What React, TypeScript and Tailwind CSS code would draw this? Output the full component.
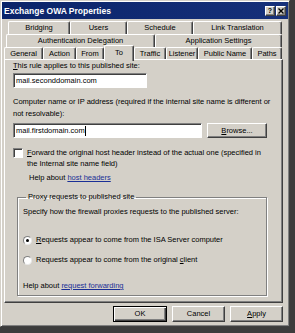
import React from "react"

const raised =
  "border border-t-white border-l-white border-r-[#404040] border-b-[#404040] shadow-[inset_-1px_-1px_0_#808080]"
const sunken =
  "border border-t-[#808080] border-l-[#808080] border-r-white border-b-white shadow-[inset_1px_1px_0_#404040] bg-white"

function Tab({ label, className, selected }: { label: string; className: string; selected?: boolean }) {
  return (
    <div
      className={`${className} flex items-center justify-center rounded-t-[2px] border-t border-l border-r border-t-white border-l-white border-r-[#404040] shadow-[inset_-1px_0_0_#808080] bg-[#d4d0c8] ${
        selected ? "relative z-10 -mt-[2px] h-[16px] -mb-[1px] pb-[2px]" : "h-full"
      }`}
    >
      {label}
    </div>
  )
}

function U({ children }: { children: React.ReactNode }) {
  return <span className="underline">{children}</span>
}

export default function App() {
  return (
    <div className="w-[295px] h-[333px] bg-[#3c3c3c] overflow-hidden font-['Liberation_Sans',Arial,sans-serif] text-[7.5px] leading-[12px] text-black">
      <div className="w-[290px] h-[327px] bg-[#d4d0c8] border border-t-[#d4d0c8] border-l-[#d4d0c8] border-r-[#404040] border-b-[#404040] shadow-[inset_1px_1px_0_#fff,inset_-1px_-1px_0_#808080] p-[1px] flex flex-col">
        {/* title bar */}
        <div className="h-[17px] bg-gradient-to-r from-[#0a246a] to-[#16307a] flex items-center justify-between pl-[2px] pr-[2px]">
          <span className="text-white font-bold text-[8.5px] leading-[12px]">Exchange OWA Properties</span>
          <div className="flex items-center gap-[1px]">
            <div className={`${raised} w-[10px] h-[10px] bg-[#d4d0c8] flex items-center justify-center text-[7px] font-bold leading-none`}>?</div>
            <div className={`${raised} w-[10px] h-[10px] bg-[#d4d0c8] flex items-center justify-center`}>
              <svg width="6" height="6" viewBox="0 0 6 6">
                <path d="M0.5 0.5 L5.5 5.5 M5.5 0.5 L0.5 5.5" stroke="#000" strokeWidth="1.4" />
              </svg>
            </div>
          </div>
        </div>

        {/* tabs */}
        <div className="mt-[2px] ml-[2px] w-[279px] flex flex-col">
          <div className="h-[13px] flex pl-[4px]">
            <Tab label="Bridging" className="w-[62px]" />
            <Tab label="Users" className="w-[57px]" />
            <Tab label="Schedule" className="w-[66px]" />
            <Tab label="Link Translation" className="w-[89px]" />
          </div>
          <div className="h-[13px] flex pl-[2px]">
            <Tab label="Authentication Delegation" className="w-[149px]" />
            <Tab label="Application Settings" className="w-[127px]" />
          </div>
          <div className="h-[12px] flex">
            <Tab label="General" className="w-[39px]" />
            <Tab label="Action" className="w-[33px]" />
            <Tab label="From" className="w-[28px]" />
            <Tab label="To" className="w-[30px]" selected />
            <Tab label="Traffic" className="w-[32px]" />
            <Tab label="Listener" className="w-[32px]" />
            <Tab label="Public Name" className="w-[54px]" />
            <Tab label="Paths" className="w-[30px]" />
          </div>

          {/* panel */}
          <div className={`${raised} h-[244px] pl-[8px] flex flex-col`}>
            <div>
              <U>T</U>his rule applies to this published site:
            </div>
            <div className={`${sunken} mt-[1px] w-[134px] h-[15px] flex items-center pl-[2px]`}>mail.seconddomain.com</div>

            <div className="mt-[8px]">
              Computer name or IP address (required if the internal site name is different or
              <br />
              not resolvable):
            </div>
            <div className="mt-[3px] flex items-center">
              <div className={`${sunken} w-[189px] h-[15px] flex items-center pl-[2px]`}>
                mail.firstdomain.com<span className="w-px h-[10px] bg-black" />
              </div>
              <div className={`${raised} ml-[5px] w-[60px] h-[15px] bg-[#d4d0c8] flex items-center justify-center`}>
                <span>
                  <U>B</U>rowse...
                </span>
              </div>
            </div>

            <div className="mt-[9px] flex items-start leading-[11px]">
              <div className={`${sunken} mt-[1px] w-[10px] h-[10px] shrink-0`} />
              <div className="ml-[4px]">
                <U>F</U>orward the original host header instead of the actual one (specified in
                <br />
                the Internal site name field)
              </div>
            </div>
            <div className="mt-[3px] pl-[16px]">
              Help about <span className="text-[#1a2f96] underline">host headers</span>
            </div>

            <fieldset className="mt-[7px] ml-[4px] w-[250px] border border-[#808080] shadow-[inset_1px_1px_0_#fff,1px_1px_0_#fff] pl-[5px] pb-[3px]">
              <legend className="ml-[3px] px-[2px]">Proxy requests to published site</legend>
              <div className="mt-[3px]">Specify how the firewall proxies requests to the published server:</div>
              <div className="mt-[16px] flex items-center">
                <div className="w-[9px] h-[9px] rounded-full bg-white border border-t-[#808080] border-l-[#808080] border-r-[#e8e8e8] border-b-[#e8e8e8] flex items-center justify-center">
                  <div className="w-[3px] h-[3px] rounded-full bg-black" />
                </div>
                <span className="ml-[4px]">
                  <U>R</U>equests appear to come from the ISA Server computer
                </span>
              </div>
              <div className="mt-[8px] flex items-center">
                <div className="w-[9px] h-[9px] rounded-full bg-white border border-t-[#808080] border-l-[#808080] border-r-[#e8e8e8] border-b-[#e8e8e8]" />
                <span className="ml-[4px]">
                  Requests appear to come from the original <U>c</U>lient
                </span>
              </div>
              <div className="mt-[14px]">
                Help about <span className="text-[#1a2f96] underline">request forwarding</span>
              </div>
            </fieldset>
          </div>

          {/* buttons */}
          <div className="mt-[3px] flex justify-end gap-[5px]">
            <div className="w-[54px] h-[16px] border border-black shadow-[inset_1px_1px_0_#fff,inset_-1px_-1px_0_#404040,inset_-2px_-2px_0_#808080] flex items-center justify-center">
              OK
            </div>
            <div className={`${raised} w-[53px] h-[16px] flex items-center justify-center`}>Cancel</div>
            <div className={`${raised} w-[53px] h-[16px] flex items-center justify-center`}>
              <span>
                <U>A</U>pply
              </span>
            </div>
          </div>
        </div>
      </div>
    </div>
  )
}
